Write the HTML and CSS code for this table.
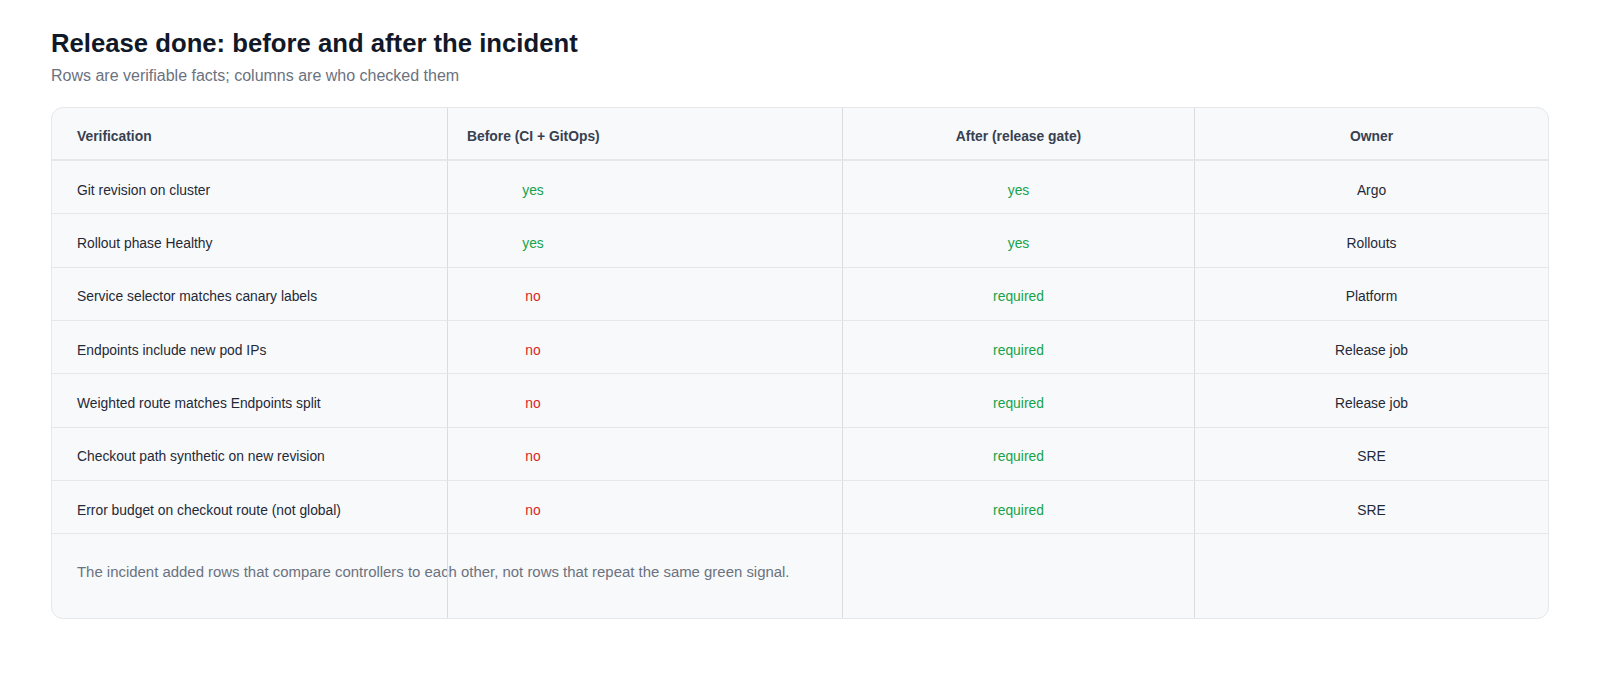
FILE: index.html
```html
<!DOCTYPE html>
<html lang="en">
<head>
<meta charset="utf-8">
<title>Release done: before and after the incident</title>
<link rel="stylesheet" href="styles.css">
</head>
<body>
<main class="page">
  <h1 class="title">Release done: before and after the incident</h1>
  <p class="subtitle">Rows are verifiable facts; columns are who checked them</p>

  <div class="table">
    <div class="cell head">Verification</div>
    <div class="cell head before">Before (CI + GitOps)</div>
    <div class="cell head center">After (release gate)</div>
    <div class="cell head center">Owner</div>

    <div class="cell">Git revision on cluster</div>
    <div class="cell before"><span class="val yes">yes</span></div>
    <div class="cell center yes">yes</div>
    <div class="cell center">Argo</div>

    <div class="cell">Rollout phase Healthy</div>
    <div class="cell before"><span class="val yes">yes</span></div>
    <div class="cell center yes">yes</div>
    <div class="cell center">Rollouts</div>

    <div class="cell">Service selector matches canary labels</div>
    <div class="cell before"><span class="val no">no</span></div>
    <div class="cell center yes">required</div>
    <div class="cell center">Platform</div>

    <div class="cell">Endpoints include new pod IPs</div>
    <div class="cell before"><span class="val no">no</span></div>
    <div class="cell center yes">required</div>
    <div class="cell center">Release job</div>

    <div class="cell">Weighted route matches Endpoints split</div>
    <div class="cell before"><span class="val no">no</span></div>
    <div class="cell center yes">required</div>
    <div class="cell center">Release job</div>

    <div class="cell">Checkout path synthetic on new revision</div>
    <div class="cell before"><span class="val no">no</span></div>
    <div class="cell center yes">required</div>
    <div class="cell center">SRE</div>

    <div class="cell">Error budget on checkout route (not global)</div>
    <div class="cell before"><span class="val no">no</span></div>
    <div class="cell center yes">required</div>
    <div class="cell center">SRE</div>

    <div class="cell foot note">The incident added rows that compare controllers to each other, not rows that repeat the same green signal.</div>
    <div class="cell foot before"></div>
    <div class="cell foot"></div>
    <div class="cell foot"></div>
  </div>
</main>
</body>
</html>
```

FILE: styles.css
```css
* { box-sizing: border-box; }

html, body {
  margin: 0;
  padding: 0;
  background: #ffffff;
}

body {
  font-family: "Liberation Sans", Arial, Helvetica, sans-serif;
  color: #1f2937;
}

.page {
  padding: 28px 51px 40px 51px;
}

.title {
  margin: 0;
  font-size: 25.7px;
  line-height: 30px;
  font-weight: 700;
  color: #111827;
}

.subtitle {
  margin: 7px 0 0 0;
  font-size: 16px;
  line-height: 22px;
  color: #6b7280;
}

.table {
  margin-top: 20px;
  display: grid;
  grid-template-columns: 395px 395px 352px 1fr;
  border: 1px solid #e5e7eb;
  border-radius: 12px;
  background: #f8f9fb;
  overflow: hidden;
}

.cell {
  height: 53.33px;
  padding: 5px 25px 0 25px;
  display: flex;
  align-items: center;
  font-size: 13.85px;
  line-height: 18px;
  color: #1f2937;
  border-bottom: 1px solid #e5e7eb;
  white-space: nowrap;
}

.cell:not(:nth-child(4n+1)) {
  border-left: 1px solid #d9dce3;
}

.head {
  height: 53px;
  padding-top: 5px;
  font-size: 13.85px;
  font-weight: 700;
  color: #374151;
  border-bottom: 2px solid #e5e7eb;
}

.center {
  justify-content: center;
  text-align: center;
}

.before {
  padding-left: 19px;
}

.val {
  display: inline-block;
  width: 132px;
  text-align: center;
}

.yes { color: #16a34a; }
.no { color: #dc2626; }

.foot {
  height: 84px;
  border-bottom: none;
  align-items: flex-start;
  padding-top: 28px;
}

.note {
  font-size: 14.93px;
  color: #6b7280;
  line-height: 20px;
  overflow: visible;
}
```
